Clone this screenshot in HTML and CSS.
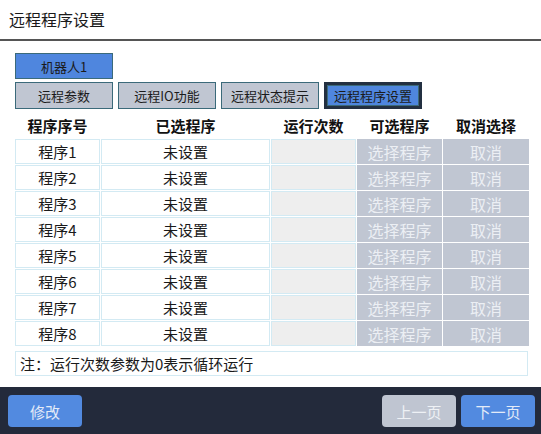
FILE: index.html
```html
<!DOCTYPE html>
<html lang="zh">
<head>
<meta charset="utf-8">
<link rel="stylesheet" href="styles.css">
</head>
<body>
<div class="page">
  <div class="header">远程程序设置</div>
  <div class="content">
    <div class="robot-row"><div class="btn btn-blue">机器人1</div></div>
    <div class="tab-row">
      <div class="btn btn-gray">远程参数</div>
      <div class="btn btn-gray">远程IO功能</div>
      <div class="btn btn-gray">远程状态提示</div>
      <div class="btn btn-active">远程程序设置</div>
    </div>
    <div class="table">
      <div class="th">程序序号</div>
      <div class="th">已选程序</div>
      <div class="th">运行次数</div>
      <div class="th">可选程序</div>
      <div class="th">取消选择</div>

      <div class="td">程序1</div><div class="td">未设置</div><div class="td td-gray"></div><div class="td td-btn">选择程序</div><div class="td td-btn">取消</div>
      <div class="td">程序2</div><div class="td">未设置</div><div class="td td-gray"></div><div class="td td-btn">选择程序</div><div class="td td-btn">取消</div>
      <div class="td">程序3</div><div class="td">未设置</div><div class="td td-gray"></div><div class="td td-btn">选择程序</div><div class="td td-btn">取消</div>
      <div class="td">程序4</div><div class="td">未设置</div><div class="td td-gray"></div><div class="td td-btn">选择程序</div><div class="td td-btn">取消</div>
      <div class="td">程序5</div><div class="td">未设置</div><div class="td td-gray"></div><div class="td td-btn">选择程序</div><div class="td td-btn">取消</div>
      <div class="td">程序6</div><div class="td">未设置</div><div class="td td-gray"></div><div class="td td-btn">选择程序</div><div class="td td-btn">取消</div>
      <div class="td">程序7</div><div class="td">未设置</div><div class="td td-gray"></div><div class="td td-btn">选择程序</div><div class="td td-btn">取消</div>
      <div class="td">程序8</div><div class="td">未设置</div><div class="td td-gray"></div><div class="td td-btn">选择程序</div><div class="td td-btn">取消</div>
    </div>
    <div class="note">注：运行次数参数为0表示循环运行</div>
  </div>
  <div class="footer">
    <div class="fbtn fbtn-blue">修改</div>
    <div class="spacer"></div>
    <div class="fbtn fbtn-gray">上一页</div>
    <div class="fbtn fbtn-blue">下一页</div>
  </div>
</div>
</body>
</html>
```
FILE: styles.css
```css
html, body {
  margin: 0;
  padding: 0;
  background: #ffffff;
}
body {
  font-family: "Noto Sans CJK SC", "Noto Sans", sans-serif;
  color: #111;
}
.page {
  width: 541px;
  height: 434px;
  display: flex;
  flex-direction: column;
  overflow: hidden;
}
.header {
  height: 39px;
  border-bottom: 2px solid #555555;
  font-size: 16px;
  line-height: 39px;
  padding-left: 9px;
  box-sizing: content-box;
  color: #1a1a1a;
}
.content {
  padding: 12px 13px 0 15px;
  display: flex;
  flex-direction: column;
}
.robot-row {
  display: flex;
}
.tab-row {
  display: flex;
  gap: 5px;
  margin-top: 3px;
}
.btn {
  width: 98px;
  height: 26px;
  box-sizing: border-box;
  display: flex;
  align-items: center;
  justify-content: center;
  font-size: 13px;
  color: #1b1b1b;
}
.btn-blue {
  background: #4f86de;
  border: 1px solid #3b6a7a;
}
.btn-gray {
  background: #c0c6d2;
  border: 1px solid #3b6a7a;
  height: 27px;
}
.btn-active {
  background: #4f86de;
  border: 3px solid #233041;
  height: 27px;
  box-shadow: 0 0 0 1px #3b6a7a inset;
}
.table {
  display: grid;
  grid-template-columns: 85px 169px 85px 85px 86px;
  grid-template-rows: 28px repeat(8, 25px);
  column-gap: 1px;
  row-gap: 1px;
  margin-top: 1px;
}
.th {
  font-size: 15px;
  font-weight: bold;
  display: flex;
  align-items: center;
  justify-content: center;
  padding-top: 2px;
  color: #111;
}
.td {
  box-sizing: border-box;
  border: 1px solid #d3eaf3;
  background: #ffffff;
  font-size: 15px;
  display: flex;
  align-items: center;
  justify-content: center;
  color: #1a1a1a;
}
.td-gray {
  background: #eeeeee;
}
.td-btn {
  background: #c0c6d2;
  border: none;
  color: #eceff4;
  font-size: 16px;
}
.note {
  margin-top: 5px;
  height: 25px;
  box-sizing: border-box;
  border: 1px solid #d3eaf3;
  font-size: 15px;
  display: flex;
  align-items: center;
  padding-left: 4px;
  color: #1a1a1a;
}
.footer {
  margin-top: auto;
  height: 47px;
  background: #232a3b;
  display: flex;
  align-items: flex-start;
  padding: 8px 6px 0 8px;
  box-sizing: border-box;
  gap: 5px;
}
.spacer {
  flex: 1;
}
.fbtn {
  width: 74px;
  height: 32px;
  border-radius: 4px;
  display: flex;
  align-items: center;
  justify-content: center;
  font-size: 15px;
  color: #e3ebf8;
}
.fbtn-blue {
  background: #528ae0;
}
.fbtn-gray {
  background: #bfc5d1;
  color: #eef1f5;
}
```
